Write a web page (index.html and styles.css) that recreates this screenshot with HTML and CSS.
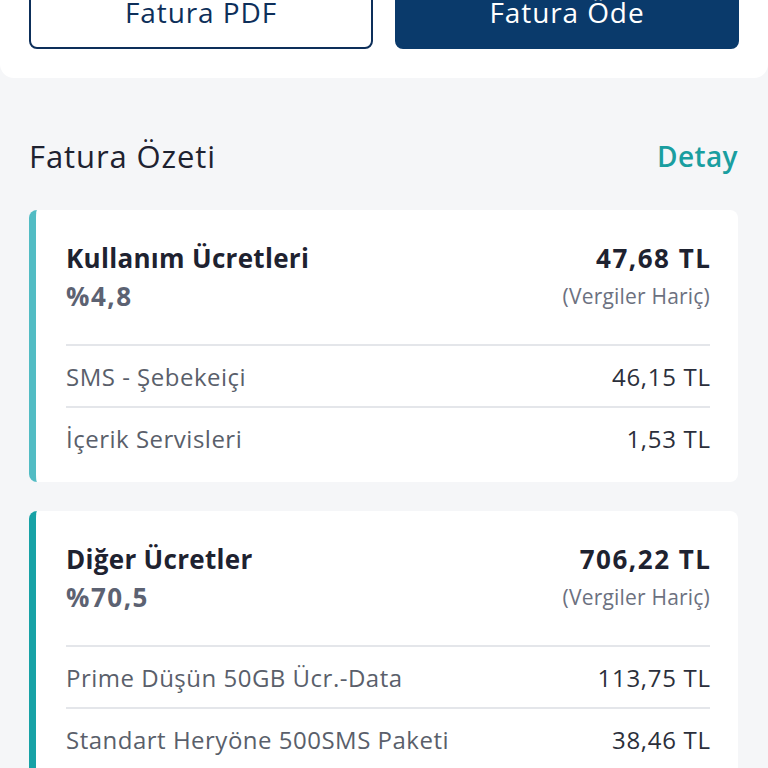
FILE: index.html
```html
<!DOCTYPE html>
<html lang="tr">
<head>
<meta charset="utf-8">
<title>Fatura Özeti</title>
<link rel="stylesheet" href="styles.css">
</head>
<body>
<div class="top-panel">
  <div class="actions">
    <button class="btn btn-outline">Fatura PDF</button>
    <button class="btn btn-fill">Fatura Öde</button>
  </div>
</div>
<main class="summary">
  <div class="summary-head">
    <h1 class="summary-title">Fatura Özeti</h1>
    <a class="detail-link">Detay</a>
  </div>
  <section class="card card-light">
    <div class="card-head">
      <div class="card-left">
        <div class="card-title">Kullanım Ücretleri</div>
        <div class="card-pct">%4,8</div>
      </div>
      <div class="card-right">
        <div class="card-amount">47,68 TL</div>
        <div class="card-note">(Vergiler Hariç)</div>
      </div>
    </div>
    <div class="row"><span class="row-label">SMS - Şebekeiçi</span><span class="row-value">46,15 TL</span></div>
    <div class="row"><span class="row-label">İçerik Servisleri</span><span class="row-value">1,53 TL</span></div>
  </section>
  <section class="card card-dark">
    <div class="card-head">
      <div class="card-left">
        <div class="card-title">Diğer Ücretler</div>
        <div class="card-pct">%70,5</div>
      </div>
      <div class="card-right">
        <div class="card-amount">706,22 TL</div>
        <div class="card-note">(Vergiler Hariç)</div>
      </div>
    </div>
    <div class="row"><span class="row-label">Prime Düşün 50GB Ücr.-Data</span><span class="row-value">113,75 TL</span></div>
    <div class="row"><span class="row-label">Standart Heryöne 500SMS Paketi</span><span class="row-value">38,46 TL</span></div>
  </section>
</main>
</body>
</html>
```
FILE: styles.css
```css
* { box-sizing: border-box; }
html, body { margin: 0; padding: 0; }
body {
  background: #f5f6f8;
  font-family: "Open Sans", "Noto Sans", sans-serif;
  color: #1e2230;
  overflow: hidden;
  height: 768px;
}
.top-panel {
  background: #ffffff;
  padding: 0 29px 29px 29px;
  border-radius: 0 0 14px 14px;
}
.actions {
  display: grid;
  grid-template-columns: 1fr 1fr;
  column-gap: 22px;
  margin-top: -26px;
}
.btn {
  height: 75px;
  border-radius: 8px;
  font-family: "Open Sans", "Noto Sans", sans-serif;
  font-size: 28px;
  letter-spacing: 0.9px;
  font-weight: 400;
  padding: 0;
}
.btn-outline {
  background: #ffffff;
  border: 2px solid #0d2f5a;
  color: #0d2f5a;
}
.btn-fill {
  background: #0a3a6b;
  border: 2px solid #0a3a6b;
  color: #ffffff;
}
.summary {
  padding: 0 30px 0 29px;
}
.summary-head {
  display: flex;
  justify-content: space-between;
  align-items: center;
  margin-top: 60px;
  height: 36px;
  margin-bottom: 36px;
}
.summary-title {
  margin: 0;
  font-size: 31px;
  letter-spacing: 0.9px;
  font-weight: 400;
  color: #1e2230;
  line-height: 36px;
}
.detail-link {
  font-size: 28px;
  letter-spacing: 0.4px;
  font-weight: 600;
  color: #1a9ea0;
  line-height: 36px;
}
.card {
  background: #ffffff;
  border-radius: 8px;
  border-left: 7px solid #52bcc4;
  padding: 0 28px 14px 30px;
  margin-bottom: 29px;
}
.card-light { border-left-color: #52bcc4; }
.card-dark { border-left-color: #17a2a6; }
.card-head {
  display: flex;
  justify-content: space-between;
  padding: 29px 0 29px 0;
  line-height: 38px;
}
.card-title {
  font-size: 26px;
  letter-spacing: 0.3px;
  font-weight: 700;
  color: #1e2230;
}
.card-pct {
  font-size: 26px;
  letter-spacing: 1.5px;
  font-weight: 700;
  color: #5c6272;
}
.card-right { text-align: right; }
.card-amount {
  font-size: 26px;
  letter-spacing: 1.5px;
  margin-right: -1.5px;
  font-weight: 700;
  color: #1e2230;
}
.card-note {
  font-size: 21px;
  letter-spacing: 0.2px;
  color: #6c7180;
}
.row {
  display: flex;
  justify-content: space-between;
  align-items: center;
  height: 62px;
  border-top: 2px solid #e4e6ea;
}
.row-label {
  font-size: 24px;
  letter-spacing: 0.5px;
  color: #5a5f6b;
}
.row-value {
  font-size: 24px;
  letter-spacing: 0.7px;
  margin-right: -0.7px;
  color: #2b2f3b;
}
```
